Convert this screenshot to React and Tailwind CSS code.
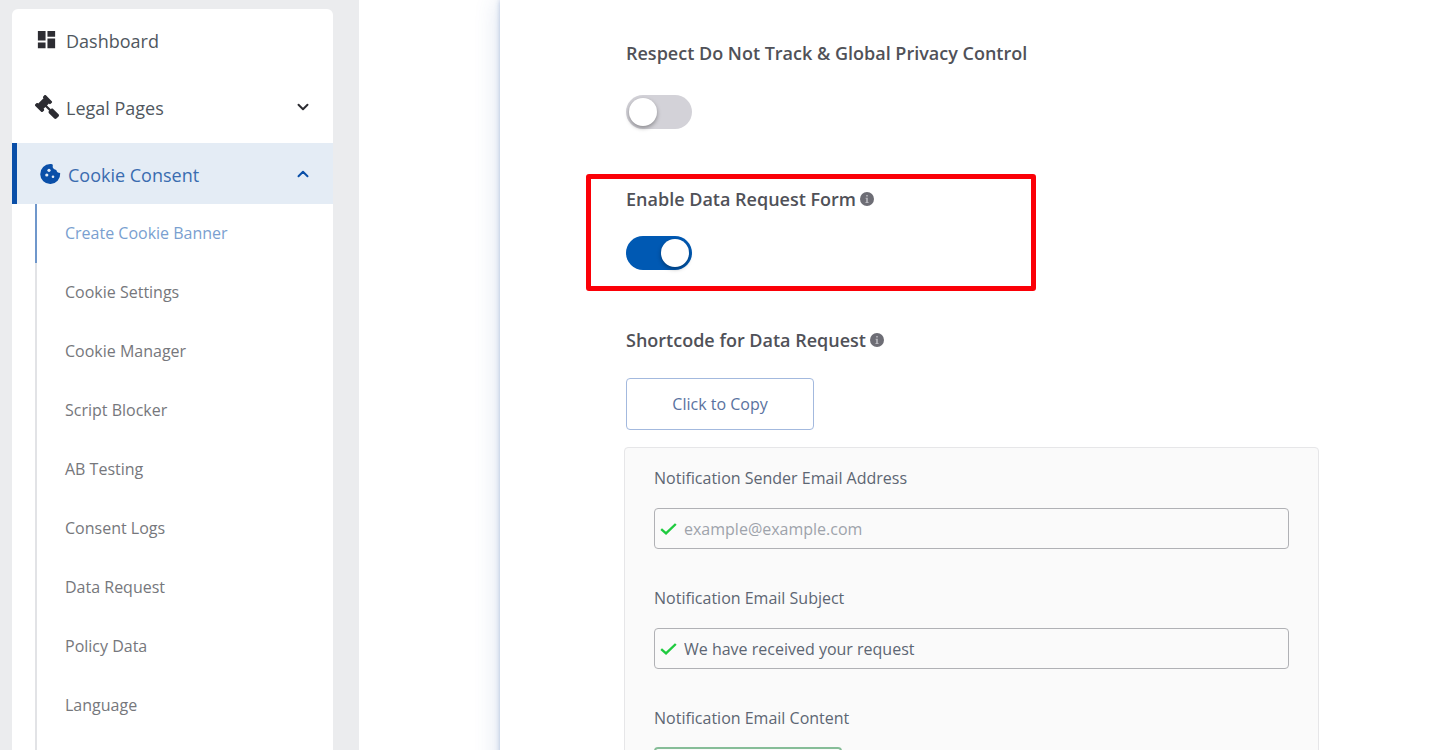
import { useState } from "react";
import { MdDashboard } from "react-icons/md";
import { FaGavel } from "react-icons/fa";
import { ChevronDown, ChevronUp } from "lucide-react";

const cookieLinks = [
  "Create Cookie Banner",
  "Cookie Settings",
  "Cookie Manager",
  "Script Blocker",
  "AB Testing",
  "Consent Logs",
  "Data Request",
  "Policy Data",
  "Language",
];

function CookieIcon() {
  return (
    <svg viewBox="0 0 24 24" className="size-6" aria-hidden="true">
      <path
        d="M12.3 2a10 10 0 1 0 9.9 9.4c-.1-.5-.8-.5-1.3-.6-1.300-.3-2.200-1.200-2.400-2.300-.1-.5-.4-.7-.9-.8-1.700-.2-3-1.500-2.900-3.100 0-.6.2-1.100.1-1.600-.1-.6-1.200-1-2.500-1z"
        fill="#0a4fa8"
      />
      <circle cx="11" cy="8.300" r="1.600" fill="#e4ecf5" />
      <circle cx="8.800" cy="13" r="1.600" fill="#e4ecf5" />
      <circle cx="15" cy="14.800" r="1.300" fill="#e4ecf5" />
    </svg>
  );
}

function Sidebar() {
  return (
    <aside className="w-[359px] shrink-0 bg-[#ebecee] pt-[9px] pr-[26px] pl-3">
      <nav className="min-h-screen rounded-t-md bg-white text-[18px] text-[#50575e]">
        <ul className="flex flex-col gap-[6px]">
          <li>
            <a href="#dashboard" className="flex h-[61px] items-center gap-2 pl-[23px]">
              <MdDashboard className="size-[23px] text-[#2c2c32]" />
              <span className="pt-[3px]">Dashboard</span>
            </a>
          </li>
          <li>
            <button type="button" aria-expanded="false" className="flex h-[61px] w-full items-center gap-[7px] pr-[21px] pl-[23px]">
              <FaGavel className="size-6 -scale-x-100 text-[#2c2c32]" />
              <span className="pt-[3px]">Legal Pages</span>
              <ChevronDown className="ml-auto size-[18px] text-[#2c2c32]" strokeWidth={2.6} />
            </button>
          </li>
          <li>
            <button
              type="button"
              aria-expanded="true"
              className="flex h-[61px] w-full items-center gap-[6px] border-l-[5px] border-[#0a4fa8] bg-[#e4ecf5] pr-[21px] pl-[21px] text-[#3a6cb0]"
            >
              <CookieIcon />
              <span className="pt-[3px]">Cookie Consent</span>
              <ChevronUp className="ml-auto size-[18px] text-[#0a4fa8]" strokeWidth={2.6} />
            </button>
            <div className="ml-[23px] border-l-2 border-[#e2e3e6] pb-14 text-[16px]">
              <ul className="-ml-[2px] grid h-[530px] auto-rows-fr">
                {cookieLinks.map((label, i) => (
                  <li key={label} className="flex">
                    <a
                      href={"#" + label.toLowerCase().replaceAll(" ", "-")}
                      aria-current={i === 0 ? "page" : undefined}
                      className={
                        i === 0
                          ? "flex flex-1 items-center border-l-2 border-[#6f97cb] pl-7 text-[#7a9fd0]"
                          : "flex flex-1 items-center border-l-2 border-transparent pl-7 text-[#76777c]"
                      }
                    >
                      {label}
                    </a>
                  </li>
                ))}
              </ul>
            </div>
          </li>
        </ul>
      </nav>
    </aside>
  );
}

function Toggle({ id, initial }) {
  const [on, setOn] = useState(initial);
  return (
    <input
      id={id}
      type="checkbox"
      role="switch"
      checked={on}
      onChange={() => setOn(!on)}
      className="block h-[34px] w-[66px] cursor-pointer appearance-none rounded-full bg-[#d3d2d8] p-[3px] before:block before:size-7 before:rounded-full before:bg-white before:shadow-[0_2px_4px_rgba(0,0,0,0.35)] checked:bg-[#0059b3] checked:before:ml-8"
    />
  );
}

function Info({ about }) {
  return (
    <button type="button" aria-label={about}>
      <svg viewBox="0 0 14 14" className="size-[14px]" aria-hidden="true">
        <circle cx="7" cy="7" r="7" fill="#6d6d75" />
        <path d="M6.2 3h1.6v1.5H6.2zM5.6 5.8h2.2v4.2h.7V11H5.5v-1h.7V6.8h-.6z" fill="#b9b9bf" />
      </svg>
    </button>
  );
}

function Check() {
  return (
    <svg viewBox="0 0 18 14" className="h-[14px] w-[18px] shrink-0" aria-hidden="true">
      <path d="M1.2 7.2 6 11.4 15.8 2" fill="none" stroke="#1fcb3f" strokeWidth="2.4" />
    </svg>
  );
}

function Field({ id, label, ...input }) {
  return (
    <div className="mb-[37px]">
      <label htmlFor={id} className="mb-[18px] block">
        {label}
      </label>
      <div className="flex h-[41px] items-center gap-[6px] rounded-[4px] border border-[#b0b1b5] px-[5px]">
        <Check />
        <input
          id={id}
          {...input}
          className="min-w-0 flex-1 bg-transparent outline-none placeholder:text-[#9ea3ab]"
        />
      </div>
    </div>
  );
}

const headingClass = "text-[18px] leading-6 font-semibold text-[#505158]";

export default function App() {
  return (
    <div className="flex h-screen overflow-hidden bg-white font-['Open_Sans','Noto_Sans',sans-serif]">
      <Sidebar />
      <main className="flex-1 pl-[141px]">
        <div className="min-h-screen bg-white pt-[41px] pr-[123px] pl-[124px] shadow-[0_0_24px_rgba(60,100,170,0.2),0_0_5px_rgba(60,100,170,0.35)]">
          <section className="pl-[2px]">
            <label htmlFor="dnt" className={"block " + headingClass}>
              Respect Do Not Track &amp; Global Privacy Control
            </label>
            <div className="mt-[30px]">
              <Toggle id="dnt" initial={false} />
            </div>
          </section>

          <section className="relative mt-[58px] pl-[2px]">
            <div className="pointer-events-none absolute -top-[13px] -bottom-[21px] -left-[38px] w-[450px] rounded-[3px] border-[5px] border-[#fb0007]" />
            <div className="flex items-center gap-1">
              <label htmlFor="request-form" className={headingClass}>
                Enable Data Request Form
              </label>
              <Info about="About the data request form" />
            </div>
            <div className="mt-[25px]">
              <Toggle id="request-form" initial={true} />
            </div>
          </section>

          <section className="mt-[58px] pl-[2px]">
            <div className="flex items-center gap-1">
              <h2 className={headingClass}>Shortcode for Data Request</h2>
              <Info about="About the shortcode" />
            </div>
            <button
              type="button"
              className="mt-[26px] h-[52px] w-[188px] rounded-[4px] border border-[#a3b9de] text-[16px] text-[#5a72a0]"
            >
              Click to Copy
            </button>
          </section>

          <section className="mt-[17px] rounded-[4px] border border-[#e6e6e8] bg-[#fafafa] px-[29px] pt-[18px] pb-8 text-[16px] leading-6 text-[#5d6673]">
            <Field id="sender" label="Notification Sender Email Address" type="email" placeholder="example@example.com" />
            <Field id="subject" label="Notification Email Subject" type="text" defaultValue="We have received your request" />
            <h3>Notification Email Content</h3>
            <button type="button" aria-label="Add media" className="mt-[17px] h-10 w-[188px] rounded-[4px] border-2 border-[#86bd98]" />
          </section>
        </div>
      </main>
    </div>
  );
}
